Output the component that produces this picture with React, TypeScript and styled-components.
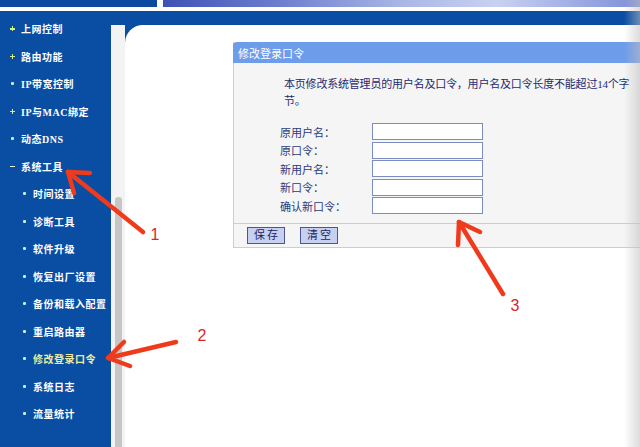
import React from "react";
import styled, { createGlobalStyle } from "styled-components";

const Global = createGlobalStyle`
  html, body { margin: 0; padding: 0; height: 100%; overflow: hidden; background: #ffffff; }
  #root { height: 100%; }
  * { box-sizing: border-box; }
`;

const FONT = `"Liberation Serif", "Noto Sans CJK SC", serif`;

const Page = styled.div`
  position: relative;
  width: 640px;
  height: 447px;
  overflow: hidden;
  display: flex;
  flex-direction: column;
  font-family: ${FONT};
`;

const Header = styled.div`
  height: 7px;
  display: flex;
  gap: 6px;
  margin-bottom: 4px;
  flex-shrink: 0;
`;

const HeaderLeft = styled.div`
  width: 157px;
  background: #0b4a9e;
`;

const HeaderBanner = styled.div`
  flex: 1;
  background: linear-gradient(90deg, #3e52b4 0%, #6f7fd0 25%, #a9b6e6 50%, #c9d1f2 70%, #7d8ed8 100%);
`;

const Main = styled.div`
  flex: 1;
  display: flex;
  background: #0a4ea4;
  min-height: 0;
`;

const Sidebar = styled.nav`
  width: 111px;
  flex-shrink: 0;
  padding-top: 4px;
  display: flex;
  flex-direction: column;
`;

const Item = styled.div<{ $level: number; $active?: boolean }>`
  height: 27.5px;
  display: flex;
  align-items: center;
  padding-left: ${(p) => (p.$level === 0 ? 10 : 21.5)}px;
  color: ${(p) => (p.$active ? "#ecec9e" : "#ffffff")};
  font-size: 10px;
  font-weight: bold;
  letter-spacing: 0.5px;
  white-space: nowrap;
`;

const BulletSlot = styled.span<{ $level: number }>`
  width: 5px;
  height: 5px;
  position: relative;
  flex-shrink: 0;
  margin-right: ${(p) => (p.$level === 0 ? 6 : 6.5)}px;
`;

const Plus = styled.span`
  position: absolute;
  inset: 0;
  &::before, &::after {
    content: "";
    position: absolute;
    background: #d4f08a;
  }
  &::before { left: 0; right: 0; top: 2px; height: 1.4px; }
  &::after { top: 0; bottom: 0; left: 2px; width: 1.4px; }
`;

const Minus = styled.span`
  position: absolute;
  left: 0;
  right: 0;
  top: 2px;
  height: 1.6px;
  background: #e8f4e0;
`;

const Dot = styled.span`
  position: absolute;
  left: 1px;
  top: 1px;
  width: 3px;
  height: 3px;
  border-radius: 1px;
  background: #bff2d8;
`;

const RightArea = styled.div`
  flex: 1;
  display: flex;
  padding-top: 14px;
  min-width: 0;
`;

const ScrollTrack = styled.div`
  width: 14px;
  flex-shrink: 0;
  background: #f3f3f3;
  padding: 0 3px 0 4px;
`;

const ScrollThumb = styled.div`
  margin-top: 172px;
  height: 400px;
  background: #c6c6c6;
  border-radius: 3px 3px 0 0;
`;

const ContentFrame = styled.main`
  flex: 1;
  background: #ffffff;
  border-top-left-radius: 18px;
  padding: 17px 0 0 108px;
  overflow: hidden;
  min-width: 0;
`;

const Panel = styled.section`
  width: 440px;
  border-left: 1px solid #efc899;
`;

const PanelTitle = styled.div`
  height: 21px;
  background: #6d9cea;
  color: #ffffff;
  font-size: 11px;
  display: flex;
  align-items: center;
  border-top-left-radius: 4px;
  margin-left: -1px;
  padding-left: 5px;
`;

const PanelBody = styled.div`
  background: #f5f5f5;
  padding: 12.5px 0 8px 50px;
  border-bottom: 1px solid #efc899;
  color: #1f2b70;
  font-size: 11px;
`;

const Intro = styled.p`
  margin: 0 0 13px 0;
  width: 352px;
  line-height: 17px;
  letter-spacing: -0.2px;
`;

const Form = styled.div`
  display: flex;
  flex-direction: column;
  margin-left: -4px;
`;

const Row = styled.div`
  height: 18.5px;
  display: flex;
  align-items: center;
`;

const Label = styled.label`
  width: 92px;
  color: #2b3a7c;
`;

const Input = styled.input`
  width: 111px;
  height: 17px;
  border: 1px solid #7d8cc0;
  background: #ffffff;
  padding: 0;
  margin: 0;
  outline: none;
`;

const ButtonBar = styled.div`
  height: 24px;
  background: #f5f5f5;
  border-bottom: 1px solid #efc899;
  display: flex;
  align-items: center;
  padding-left: 13px;
  gap: 15px;
`;

const Button = styled.button`
  height: 17px;
  width: 38px;
  padding: 0;
  background: #c6d0f1;
  border: 1px solid #4c5690;
  color: #1c2360;
  font-family: ${FONT};
  font-size: 11px;
  letter-spacing: 2px;
  text-indent: 2px;
  line-height: 15px;
`;

const EdgeShade = styled.div`
  position: absolute;
  top: 0;
  right: 0;
  width: 16px;
  height: 100%;
  background: linear-gradient(90deg, rgba(200, 200, 200, 0) 0%, rgba(190, 190, 190, 0.55) 100%);
  pointer-events: none;
`;

const Annotations = styled.svg`
  position: absolute;
  left: 0;
  top: 0;
  width: 640px;
  height: 447px;
  pointer-events: none;
`;

type Bullet = "plus" | "minus" | "dot";
const menu: { label: string; level: number; bullet: Bullet; active?: boolean }[] = [
  { label: "上网控制", level: 0, bullet: "plus" },
  { label: "路由功能", level: 0, bullet: "plus" },
  { label: "IP带宽控制", level: 0, bullet: "dot" },
  { label: "IP与MAC绑定", level: 0, bullet: "plus" },
  { label: "动态DNS", level: 0, bullet: "dot" },
  { label: "系统工具", level: 0, bullet: "minus" },
  { label: "时间设置", level: 1, bullet: "dot" },
  { label: "诊断工具", level: 1, bullet: "dot" },
  { label: "软件升级", level: 1, bullet: "dot" },
  { label: "恢复出厂设置", level: 1, bullet: "dot" },
  { label: "备份和载入配置", level: 1, bullet: "dot" },
  { label: "重启路由器", level: 1, bullet: "dot" },
  { label: "修改登录口令", level: 1, bullet: "dot", active: true },
  { label: "系统日志", level: 1, bullet: "dot" },
  { label: "流量统计", level: 1, bullet: "dot" },
];

const fields = ["原用户名：", "原口令：", "新用户名：", "新口令：", "确认新口令："];

const arrows = [
  { tail: [143, 232], tip: [68, 172], w1: [90, 173], w2: [74, 193] },
  { tail: [176, 342], tip: [108, 358], w1: [124, 342], w2: [130, 366] },
  { tail: [503, 294], tip: [459, 222], w1: [480, 232], w2: [458, 245] },
];

const labels = [
  { n: "1", x: 155, y: 240 },
  { n: "2", x: 202, y: 341 },
  { n: "3", x: 515, y: 311 },
];

export default function App() {
  return (
    <>
      <Global />
      <Page>
        <Header>
          <HeaderLeft />
          <HeaderBanner />
        </Header>
        <Main>
          <Sidebar>
            {menu.map((m) => (
              <Item key={m.label} $level={m.level} $active={m.active}>
                <BulletSlot $level={m.level}>
                  {m.bullet === "plus" && <Plus />}
                  {m.bullet === "minus" && <Minus />}
                  {m.bullet === "dot" && <Dot />}
                </BulletSlot>
                {m.label}
              </Item>
            ))}
          </Sidebar>
          <RightArea>
            <ScrollTrack>
              <ScrollThumb />
            </ScrollTrack>
            <ContentFrame>
              <Panel>
                <PanelTitle>修改登录口令</PanelTitle>
                <PanelBody>
                  <Intro>本页修改系统管理员的用户名及口令，用户名及口令长度不能超过14个字节。</Intro>
                  <Form>
                    {fields.map((f) => (
                      <Row key={f}>
                        <Label>{f}</Label>
                        <Input type={f.includes("口令") ? "password" : "text"} />
                      </Row>
                    ))}
                  </Form>
                </PanelBody>
                <ButtonBar>
                  <Button>保存</Button>
                  <Button>清空</Button>
                </ButtonBar>
              </Panel>
            </ContentFrame>
          </RightArea>
        </Main>
        <EdgeShade />
        <Annotations viewBox="0 0 640 447">
          {arrows.map((a, i) => (
            <g key={i} stroke="#ef3a1c" strokeWidth={4.5} strokeLinecap="round" strokeLinejoin="round" fill="none">
              <line x1={a.tail[0]} y1={a.tail[1]} x2={a.tip[0]} y2={a.tip[1]} />
              <polyline points={`${a.w1[0]},${a.w1[1]} ${a.tip[0]},${a.tip[1]} ${a.w2[0]},${a.w2[1]}`} />
            </g>
          ))}
          {labels.map((l) => (
            <text
              key={l.n}
              x={l.x}
              y={l.y}
              textAnchor="middle"
              fontFamily='"Liberation Sans", Arial, sans-serif'
              fontSize={16}
              fill="#d9281f"
            >
              {l.n}
            </text>
          ))}
        </Annotations>
      </Page>
    </>
  );
}
